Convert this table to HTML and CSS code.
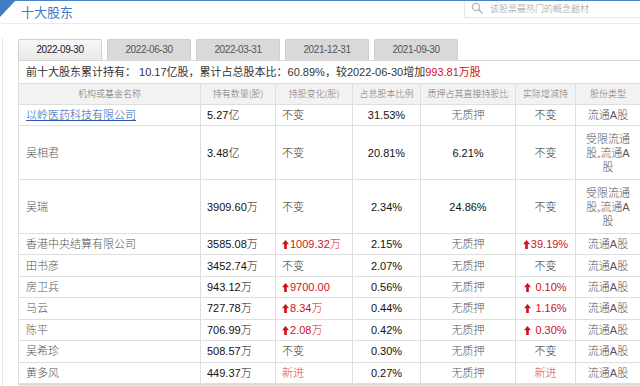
FILE: index.html
```html
<!DOCTYPE html>
<html>
<head>
<meta charset="utf-8">
<link rel="stylesheet" href="styles.css">
</head>
<body>
<div class="header">
  <svg class="corner" width="16" height="17" viewBox="0 0 16 17"><polygon points="0,0 16,0 0,17" fill="#3f7cc3"/></svg>
  <div class="title">十大股东</div>
  <div class="search">
    <svg class="sicon" width="12" height="12" viewBox="0 0 12 12"><circle cx="5" cy="5" r="3.6" fill="none" stroke="#b8b8b8" stroke-width="1.3"/><line x1="7.6" y1="7.6" x2="11" y2="11" stroke="#b8b8b8" stroke-width="1.6" stroke-linecap="round"/></svg>
    <span class="ph">该股票最热门的概念题材</span>
  </div>
</div>
<div class="main">
  <div class="tabs">
    <div class="tab active">2022-09-30</div>
    <div class="tab">2022-06-30</div>
    <div class="tab">2022-03-31</div>
    <div class="tab">2021-12-31</div>
    <div class="tab">2021-09-30</div>
  </div>
  <div class="box">
    <div class="summary">前十大股东累计持有： 10.17亿股，累计占总股本比：60.89%，较2022-06-30增加<span class="red">993.81万股</span></div>
    <table class="grid">
      <colgroup>
        <col class="c1"><col class="c2"><col class="c3"><col class="c4"><col class="c5"><col class="c6"><col class="c7">
      </colgroup>
      <tr class="head">
        <th>机构或基金名称</th><th>持有数量(股)</th><th>持股变化(股)</th><th>占总股本比例</th><th>质押占其直接持股比</th><th>实际增减持</th><th>股份类型</th>
      </tr>
      <tr class="r1">
        <td class="name"><span class="link">以岭医药科技有限公司</span></td><td class="num">5.27亿</td><td class="chg">不变</td><td class="ctr num">31.53%</td><td class="ctr txt">无质押</td><td class="ctr chg">不变</td><td class="ctr txt type">流通A股</td>
      </tr>
      <tr class="tall">
        <td class="name">吴相君</td><td class="num">3.48亿</td><td class="chg">不变</td><td class="ctr num">20.81%</td><td class="ctr num">6.21%</td><td class="ctr chg">不变</td><td class="ctr txt type">受限流通股,流通A股</td>
      </tr>
      <tr class="tall">
        <td class="name">吴瑞</td><td class="num">3909.60万</td><td class="chg">不变</td><td class="ctr num">2.34%</td><td class="ctr num">24.86%</td><td class="ctr chg">不变</td><td class="ctr txt type">受限流通股,流通A股</td>
      </tr>
      <tr class="row">
        <td class="name">香港中央结算有限公司</td><td class="num">3585.08万</td><td class="red"><svg class="up" width="7" height="9" viewBox="0 0 7 9"><polygon points="3.5,0 7,4.2 4.8,4.2 4.8,9 2.2,9 2.2,4.2 0,4.2" fill="#d0101c"/></svg>1009.32万</td><td class="ctr num">2.15%</td><td class="ctr txt">无质押</td><td class="ctr red"><svg class="up" width="7" height="9" viewBox="0 0 7 9"><polygon points="3.5,0 7,4.2 4.8,4.2 4.8,9 2.2,9 2.2,4.2 0,4.2" fill="#d0101c"/></svg>39.19%</td><td class="ctr txt type">流通A股</td>
      </tr>
      <tr class="row">
        <td class="name">田书彦</td><td class="num">3452.74万</td><td class="chg">不变</td><td class="ctr num">2.07%</td><td class="ctr txt">无质押</td><td class="ctr chg">不变</td><td class="ctr txt type">流通A股</td>
      </tr>
      <tr class="row">
        <td class="name">房卫兵</td><td class="num">943.12万</td><td class="red"><svg class="up" width="7" height="9" viewBox="0 0 7 9"><polygon points="3.5,0 7,4.2 4.8,4.2 4.8,9 2.2,9 2.2,4.2 0,4.2" fill="#d0101c"/></svg>9700.00</td><td class="ctr num">0.56%</td><td class="ctr txt">无质押</td><td class="ctr red"><svg class="up" width="7" height="9" viewBox="0 0 7 9"><polygon points="3.5,0 7,4.2 4.8,4.2 4.8,9 2.2,9 2.2,4.2 0,4.2" fill="#d0101c"/></svg> 0.10%</td><td class="ctr txt type">流通A股</td>
      </tr>
      <tr class="row">
        <td class="name">马云</td><td class="num">727.78万</td><td class="red"><svg class="up" width="7" height="9" viewBox="0 0 7 9"><polygon points="3.5,0 7,4.2 4.8,4.2 4.8,9 2.2,9 2.2,4.2 0,4.2" fill="#d0101c"/></svg>8.34万</td><td class="ctr num">0.44%</td><td class="ctr txt">无质押</td><td class="ctr red"><svg class="up" width="7" height="9" viewBox="0 0 7 9"><polygon points="3.5,0 7,4.2 4.8,4.2 4.8,9 2.2,9 2.2,4.2 0,4.2" fill="#d0101c"/></svg> 1.16%</td><td class="ctr txt type">流通A股</td>
      </tr>
      <tr class="row">
        <td class="name">陈平</td><td class="num">706.99万</td><td class="red"><svg class="up" width="7" height="9" viewBox="0 0 7 9"><polygon points="3.5,0 7,4.2 4.8,4.2 4.8,9 2.2,9 2.2,4.2 0,4.2" fill="#d0101c"/></svg>2.08万</td><td class="ctr num">0.42%</td><td class="ctr txt">无质押</td><td class="ctr red"><svg class="up" width="7" height="9" viewBox="0 0 7 9"><polygon points="3.5,0 7,4.2 4.8,4.2 4.8,9 2.2,9 2.2,4.2 0,4.2" fill="#d0101c"/></svg> 0.30%</td><td class="ctr txt type">流通A股</td>
      </tr>
      <tr class="row">
        <td class="name">吴希珍</td><td class="num">508.57万</td><td class="chg">不变</td><td class="ctr num">0.30%</td><td class="ctr txt">无质押</td><td class="ctr chg">不变</td><td class="ctr txt type">流通A股</td>
      </tr>
      <tr class="row">
        <td class="name">黄多风</td><td class="num">449.37万</td><td class="new">新进</td><td class="ctr num">0.27%</td><td class="ctr txt">无质押</td><td class="ctr new">新进</td><td class="ctr txt type">流通A股</td>
      </tr>
    </table>
    <div class="foot"></div>
  </div>
</div>
</body>
</html>
```

FILE: styles.css
```css
* { box-sizing: border-box; }
html, body { margin: 0; padding: 0; overflow: hidden; background: #fff; }
body {
  width: 640px;
  height: 386px;
  font-family: "Liberation Sans", "Noto Sans CJK SC", sans-serif;
  color: #333;
}
.header {
  display: flex;
  align-items: flex-start;
  height: 24px;
  border-top: 1px solid #4a84c6;
  border-bottom: 1px solid #ececec;
}
.corner { display: block; flex: none; margin-top: -1px; }
.title {
  margin-left: 5px;
  font-family: "Noto Sans CJK SC", sans-serif;
  font-size: 13px;
  line-height: 22px;
  color: #3a7bc8;
}
.search {
  margin-left: auto;
  width: 176px;
  height: 17px;
  border: 1px solid #e4e4e4;
  border-top: none;
  border-right: none;
  display: flex;
  align-items: center;
  padding-left: 6px;
}
.sicon { display: block; margin-right: 7px; margin-top: -2px; }
.ph {
  font-family: "Noto Sans CJK SC", sans-serif;
  font-weight: 300;
  font-size: 9px;
  line-height: 12px;
  color: #9a9a9a;
}
.main {
  margin-left: 2px;
  border-left: 1px dotted #cfcfcf;
  padding-left: 15px;
  height: 362px;
}
.tabs {
  display: flex;
  gap: 5px;
  margin-top: 15px;
}
.tab {
  width: 84px;
  height: 21px;
  border: 1px solid #cfcfcf;
  border-bottom: none;
  border-radius: 2px 2px 0 0;
  background: #d9d9d9;
  color: #555;
  font-size: 10px;
  letter-spacing: -0.4px;
  line-height: 20px;
  text-align: center;
}
.tab.active {
  background: linear-gradient(#f7f7f7, #e9e9e9);
  color: #222;
}
.box {
  border-top: 1px solid #d6d6d6;
  width: 625px;
}
.summary {
  height: 22px;
  border-left: 1px solid #dcdcdc;
  padding-left: 7px;
  font-size: 11px;
  line-height: 22px;
  color: #333;
  white-space: nowrap;
}
.red { color: #d0101c; }
.grid {
  border-collapse: collapse;
  table-layout: fixed;
  width: 623px;
  font-size: 11px;
  font-weight: 300;
}
.c1 { width: 182px; }
.c2 { width: 75px; }
.c3 { width: 77px; }
.c4 { width: 68px; }
.c5 { width: 95px; }
.c6 { width: 60px; }
.c7 { width: 65px; }
.grid th, .grid td {
  border: 1px solid #dedede;
  padding: 0 6px;
  line-height: 14px;
  vertical-align: middle;
  overflow: hidden;
}
.grid th {
  background: #f2f2f2;
  font-family: "Noto Sans CJK SC", sans-serif;
  font-weight: 300;
  font-size: 9px;
  color: #777;
  text-align: center;
  padding: 0 2px;
}
.head { height: 21px; }
.r1 { height: 21px; }
.tall { height: 54px; }
.row { height: 21.43px; }
.grid td.name { padding-left: 7px; color: #555; }
.link { color: #2b5cb5; text-decoration: underline; }
.num { color: #111; }
.chg { color: #333; }
.txt { color: #555; }
.ctr { text-align: center; }
.grid td.ctr { padding: 0 4px; }
.grid td.type { padding: 0 7px; }
.new { color: #de3d48; }
.up { display: inline-block; vertical-align: -1px; margin-right: 1px; }
.foot {
  height: 6px;
  background: #e9e9e9;
  border-top: 1px solid #d8d8d8;
}
```
